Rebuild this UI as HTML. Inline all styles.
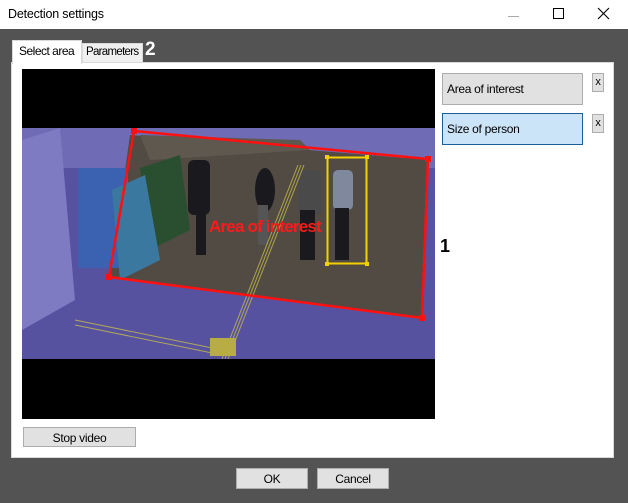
<!DOCTYPE html>
<html><head><meta charset="utf-8"><style>
*{margin:0;padding:0;box-sizing:border-box}
body{width:628px;height:503px;background:#535353;font-family:"Liberation Sans",sans-serif;position:relative;overflow:hidden;font-size:12px;color:#000}
.abs{position:absolute}
.title{left:0;top:0;width:628px;height:29px;background:#fff}
.btn{position:absolute;background:#e1e1e1;border:1px solid #adadad;text-align:center;font-size:12px;letter-spacing:-0.3px}
</style></head><body>
<div class="abs title">
 <div class="abs" style="left:8px;top:7px;font-size:12.5px;letter-spacing:-0.2px">Detection settings</div>
 <div class="abs" style="left:508px;top:16px;width:11px;height:1px;background:#aaa"></div>
 <div class="abs" style="left:553px;top:8px;width:11px;height:11px;border:1px solid #000"></div>
 <svg class="abs" style="left:597px;top:7px" width="13" height="13"><path d="M1 1L12 12M12 1L1 12" stroke="#000" stroke-width="1.1"/></svg>
</div>
<!-- tabs -->
<div class="abs" style="left:82px;top:43px;width:61px;height:20px;background:#f0f0f0;border:1px solid #d9d9d9;border-bottom:none"></div>
<div class="abs" style="left:86px;top:46px;font-size:11.5px;letter-spacing:-0.7px">Parameters</div>
<div class="abs" style="left:145px;top:39px;font-size:19px;font-weight:bold;color:#fff">2</div>
<div class="abs" style="left:11px;top:62px;width:603px;height:396px;background:#fff;border:1px solid #d9d9d9"></div>
<div class="abs" style="left:12px;top:40px;width:70px;height:24px;background:#fff;border:1px solid #d9d9d9;border-bottom:none"></div>
<div class="abs" style="left:19px;top:44px;font-size:12px;letter-spacing:-0.5px">Select area</div>
<!-- video -->
<div class="abs" style="left:22px;top:69px;width:413px;height:350px;background:#000"></div>
<svg class="abs" style="left:22px;top:128px" width="413" height="231" viewBox="22 128 413 231">
 <rect x="22" y="128" width="413" height="231" fill="#5652a0"/>
 <rect x="22" y="128" width="413" height="40" fill="#6f6bb5"/>
 <polygon points="22,140 60,128 75,300 22,330" fill="#7f7bc2"/>
 <polygon points="130,135 428,160 422,318 110,278" fill="#514b43"/>
 <polygon points="140,135 300,140 310,150 150,160" fill="#5e584e"/>
 <rect x="78" y="168" width="50" height="100" fill="#3a62b0"/>
 <polygon points="140,168 180,155 190,230 150,250" fill="#2a4f30"/>
 <polygon points="112,190 145,175 160,260 120,280" fill="#3a78a0"/>
 <g fill="#1a1a1e">
  <rect x="188" y="160" width="22" height="55" rx="6"/><rect x="196" y="210" width="10" height="45"/>
  <ellipse cx="265" cy="190" rx="10" ry="22"/><rect x="258" y="205" width="10" height="40" fill="#555"/>
  <rect x="298" y="170" width="24" height="45" rx="6" fill="#4a4a4a"/><rect x="300" y="210" width="15" height="50"/>
  <rect x="333" y="170" width="20" height="40" rx="5" fill="#7f889c"/><rect x="335" y="208" width="14" height="52"/>
 </g>
 <g stroke="#c7bb4a" stroke-width="1" fill="none" opacity="0.8">
  <path d="M298 165L222 359M301 165L225 359M304 165L228 359"/>
  <path d="M75 320L222 350M75 325L222 355"/>
 </g>
 <rect x="210" y="338" width="26" height="18" fill="#b8ad45"/>
 <polygon points="134,131 428,159 422,318 109,277" fill="none" stroke="#ff1010" stroke-width="2.5"/>
 <g fill="#ff1010"><rect x="131" y="128" width="6" height="6"/><rect x="425" y="156" width="6" height="6"/><rect x="419" y="315" width="6" height="6"/><rect x="106" y="274" width="6" height="6"/></g>
 <rect x="327.5" y="157.5" width="39" height="106" fill="none" stroke="#f5d000" stroke-width="2"/>
 <g fill="#f5d000"><rect x="325" y="155" width="4" height="4"/><rect x="365" y="155" width="4" height="4"/><rect x="325" y="262" width="4" height="4"/><rect x="365" y="262" width="4" height="4"/></g>
 <text x="209" y="232" font-family="Liberation Sans,sans-serif" font-weight="bold" font-size="17" fill="#ff1a1a" letter-spacing="-0.8">Area of interest</text>
</svg>
<div class="abs" style="left:440px;top:236px;font-size:18px;font-weight:bold">1</div>
<!-- right buttons -->
<div class="btn" style="left:442px;top:73px;width:141px;height:32px;text-align:left;padding:8px 0 0 4px">Area of interest</div>
<div class="btn" style="left:592px;top:73px;width:12px;height:19px;padding-top:2px;font-size:11px">x</div>
<div class="btn" style="left:442px;top:113px;width:141px;height:32px;text-align:left;padding:8px 0 0 4px;background:#cce4f7;border-color:#1b5f96">Size of person</div>
<div class="btn" style="left:592px;top:114px;width:12px;height:19px;padding-top:2px;font-size:11px">x</div>
<div class="btn" style="left:23px;top:427px;width:113px;height:20px;padding-top:3px">Stop video</div>
<div class="btn" style="left:236px;top:468px;width:72px;height:21px;padding-top:3px">OK</div>
<div class="btn" style="left:317px;top:468px;width:72px;height:21px;padding-top:3px">Cancel</div>
</body></html>
